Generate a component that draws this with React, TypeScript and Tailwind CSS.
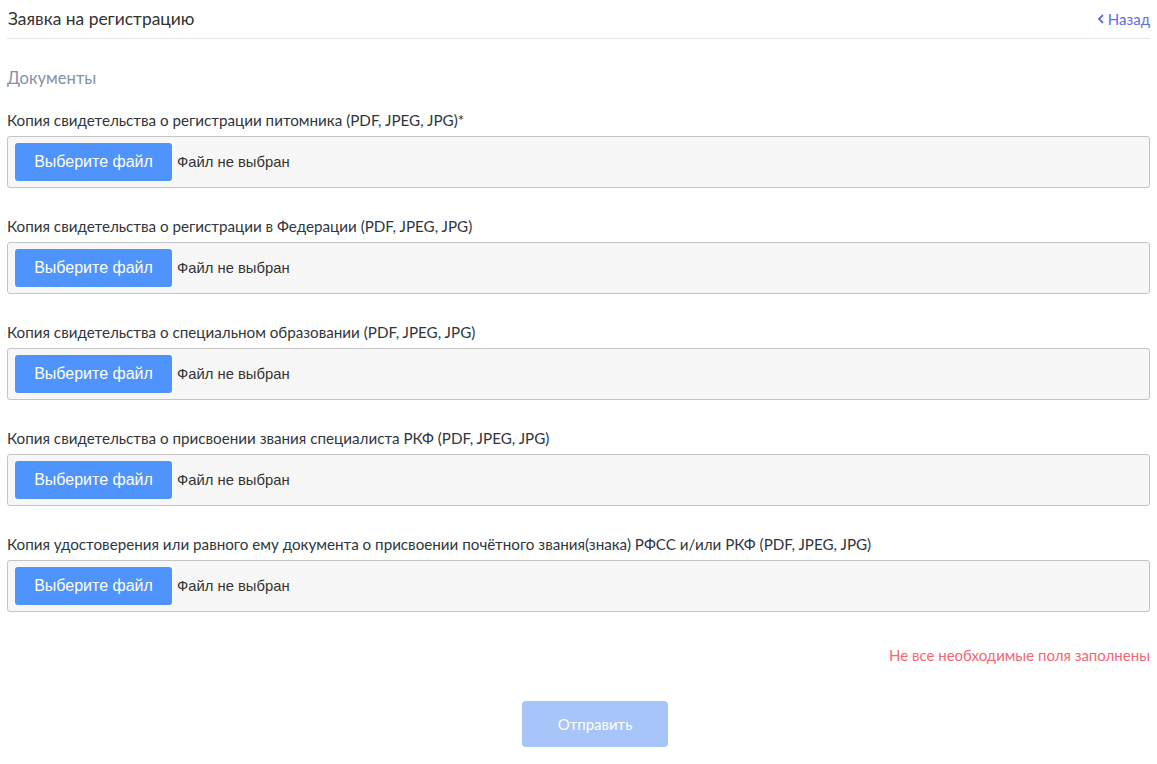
import React from 'react';

const documents = [
  { label: 'Копия свидетельства о регистрации питомника (PDF, JPEG, JPG)*' },
  { label: 'Копия свидетельства о регистрации в Федерации (PDF, JPEG, JPG)' },
  { label: 'Копия свидетельства о специальном образовании (PDF, JPEG, JPG)' },
  { label: 'Копия свидетельства о присвоении звания специалиста РКФ (PDF, JPEG, JPG)' },
  { label: 'Копия удостоверения или равного ему документа о присвоении почётного звания(знака) РФСС и/или РКФ (PDF, JPEG, JPG)' },
];

const FileField: React.FC<{ label: string }> = ({ label }) => (
  <div className="flex flex-col">
    <div className="text-[15.2px] leading-[20px] text-[#2f3640]">{label}</div>
    <div className="mt-[6px] h-[52px] flex items-center gap-[5px] px-[7px] bg-[#f7f7f7] border border-[#c4c4c4] rounded-[3px] font-['Liberation_Sans',sans-serif]">
      <button className="w-[157px] h-[38px] rounded-[3px] bg-[#4f94fc] text-white text-[16px]">
        Выберите файл
      </button>
      <span className="text-[14.8px] text-[#333]">Файл не выбран</span>
    </div>
  </div>
);

export default function App() {
  return (
    <div className="min-h-screen bg-white px-[7px] font-['Lato',sans-serif]">
      <div className="flex items-center justify-between h-[39px] border-b border-[#e6e6e6]">
        <span className="pl-px text-[17.4px] text-[#333]">Заявка на регистрацию</span>
        <a href="#" className="flex items-center gap-[3px] text-[15px] text-[#5b6cf5]">
          <svg className="w-[8px] h-[10px]" viewBox="0 0 8 10" fill="none" stroke="currentColor" strokeWidth="1.8">
            <path d="M6 1L2 5l4 4" />
          </svg>
          Назад
        </a>
      </div>

      <div className="mt-[27px] text-[16.6px] leading-[24px] text-[#8791a8]">Документы</div>

      <div className="mt-[20px] flex flex-col gap-[28px]">
        {documents.map((d) => (
          <FileField key={d.label} label={d.label} />
        ))}
      </div>

      <div className="mt-[33px] text-right text-[15px] leading-[20px] text-[#f56673]">
        Не все необходимые поля заполнены
      </div>

      <div className="mt-[36px] flex justify-center pl-[33px]">
        <button disabled className="w-[146px] h-[46px] rounded-[4px] bg-[#a8c5fa] text-white text-[15px]">
          Отправить
        </button>
      </div>
    </div>
  );
}
